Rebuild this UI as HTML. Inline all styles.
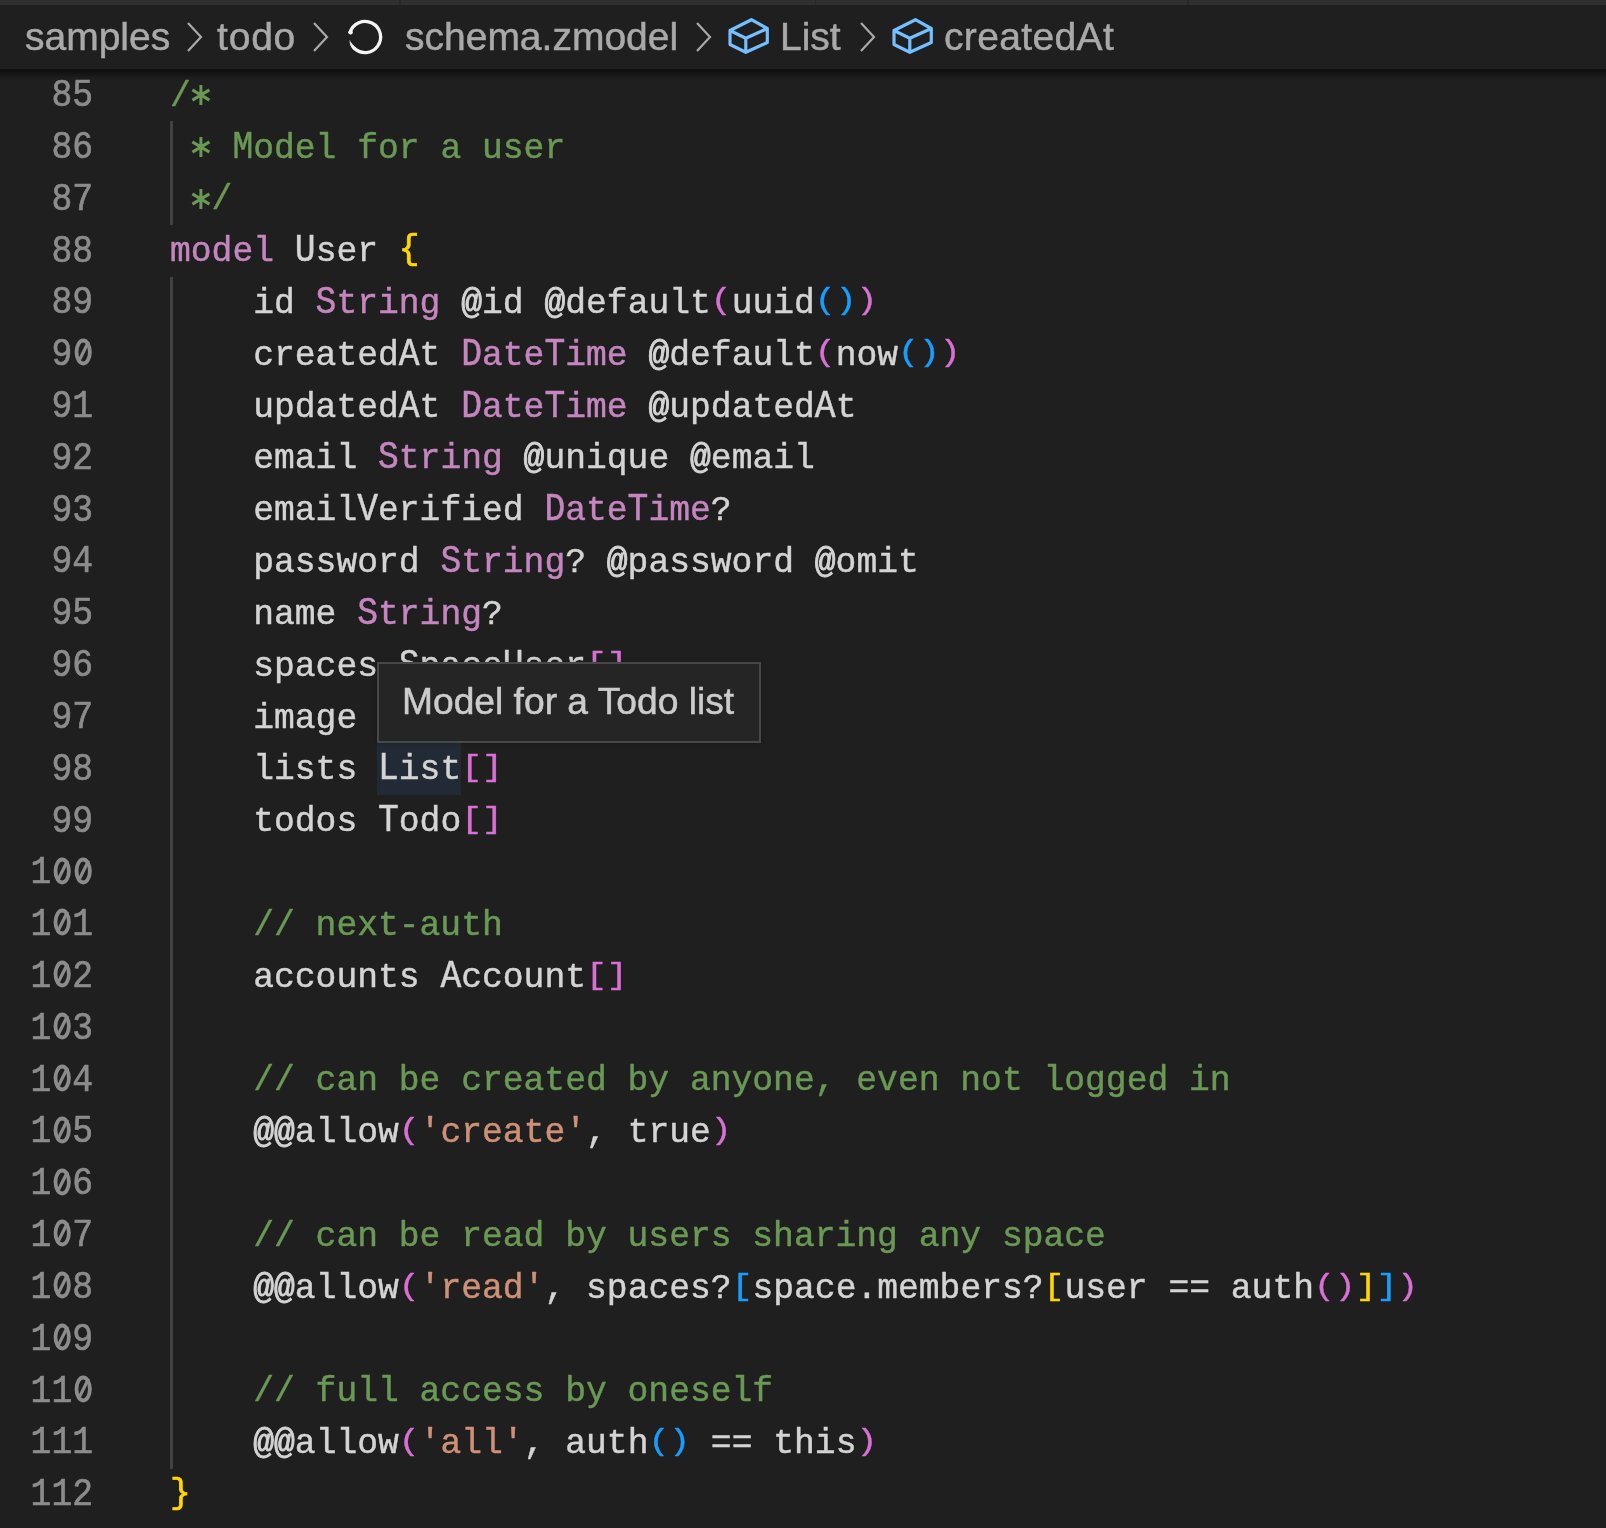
<!DOCTYPE html>
<html><head><meta charset="utf-8">
<style>
html,body{margin:0;padding:0}
body{width:1606px;height:1528px;background:#1f1f1f;position:relative;overflow:hidden}
.tabs{position:absolute;left:0;top:0;width:1606px;height:5px;background:#2f2f2f}
.tabs i{position:absolute;top:0;width:1.6px;height:5px;background:#262626}
.bc{position:absolute;left:0;top:5px;width:1606px;height:64px;background:#1f1f1f}
.shadow{position:absolute;left:0;top:69.3px;width:1606px;height:12px;background:linear-gradient(#111111 0px,#111111 3px,#171717 6px,#1c1c1c 8.5px,#1f1f1f 12px)}
.bt{position:absolute;top:0;height:64px;line-height:64px;font-family:"Liberation Sans",sans-serif;font-size:39px;color:#a9a9a9;white-space:pre;-webkit-text-stroke:0.5px currentColor;will-change:transform}
.ln{position:absolute;left:0;width:93px;text-align:right;height:52px;line-height:52px;font-family:"Liberation Mono",monospace;font-size:34.66px;color:#8c8c8c;white-space:pre;transform:scaleY(1.14);transform-origin:0 35.22px;margin-top:1.6px}
.cl{position:absolute;left:169.6px;height:52px;line-height:52px;font-family:"Liberation Mono",monospace;font-size:34.66px;color:#d4d4d4;white-space:pre;transform:scaleY(1.0);transform-origin:0 35.22px;margin-top:1.2px}
.g{color:#6a9955}.p{color:#c586c0}.o{color:#da70d6}.b{color:#179fff}.y{color:#ffd700}.s{color:#ce9178}
.hl{position:absolute;background:#212a35}
.astsvg{position:absolute}
.brc{display:inline-block;transform:translateY(-2.5px);-webkit-text-stroke:0.7px currentColor}
.at{-webkit-text-stroke:0.9px currentColor}
.cap{display:inline-block;transform:scaleY(1.13);transform-origin:50% 35.22px}
.br{display:inline-block;transform:scaleY(0.86);transform-origin:50% 10px;-webkit-text-stroke:0.5px currentColor}
.ast{display:inline-block;transform:translateY(11.6px) scale(1.7,1.4);-webkit-text-stroke:0.15px currentColor}
.cl,.ln{-webkit-text-stroke:0.45px currentColor;will-change:transform}
.ln{-webkit-text-stroke:0.6px currentColor}
.guide{position:absolute;left:170.3px;width:2.6px;background:#424242}
.tip{position:absolute;left:377px;top:662px;width:380px;height:77px;background:#252525;border:2px solid #484848;box-shadow:0 0 4px rgba(0,0,0,0.25)}
.tip span{position:absolute;left:22.5px;top:-1px;will-change:transform;-webkit-text-stroke:0.5px currentColor;line-height:77px;font-family:"Liberation Sans",sans-serif;font-size:37.2px;color:#cccccc;white-space:pre}
</style></head><body>
<div class="tabs"><i style="left:399.4px"></i><i style="left:814.5px"></i><i style="left:1187.3px"></i></div>
<div class="bc">
<span class="bt" style="left:25px">samples</span>
<svg style="position:absolute;left:185px;top:16px" width="20" height="32"><path d="M3 2 L16 16 L3 30" fill="none" stroke="#a9a9a9" stroke-width="2.2"/></svg>
<span class="bt" style="left:217px;letter-spacing:0.8px">todo</span>
<svg style="position:absolute;left:311px;top:16px" width="20" height="32"><path d="M3 2 L16 16 L3 30" fill="none" stroke="#a9a9a9" stroke-width="2.2"/></svg>
<svg style="position:absolute;left:340px;top:7px" width="50" height="50"><g fill="none" stroke="#f4f4f4" stroke-linecap="round"><path d="M10.08 20.44A15.6 15.6 0 1 1 13.97 36.03" stroke-width="3.3"/><path d="M13.97 36.03A15.6 15.6 0 0 1 12.54 34.39" stroke-width="3"/><path d="M12.54 34.39A15.6 15.6 0 0 1 11.36 32.56" stroke-width="2.4" stroke-opacity="0.9"/><path d="M11.36 32.56A15.6 15.6 0 0 1 10.44 30.59" stroke-width="1.8" stroke-opacity="0.75"/><path d="M10.44 30.59A15.6 15.6 0 0 1 9.80 28.51" stroke-width="1.1" stroke-opacity="0.5"/></g><circle cx="10.6" cy="20.3" r="2.2" fill="#f4f4f4"/></svg>
<span class="bt" style="left:405px">schema.zmodel</span>
<svg style="position:absolute;left:694px;top:16px" width="20" height="32"><path d="M3 2 L16 16 L3 30" fill="none" stroke="#a9a9a9" stroke-width="2.2"/></svg>
<svg style="position:absolute;left:720px;top:7px" width="60" height="50"><path d="M31.4 7.7 L47.3 16.5 L47.3 30.5 L25.8 40.3 L10 32.5 L10 18.5 Z M10 18.5 L25.8 26.3 L47.3 16.5 M25.8 26.3 L25.8 40.3" fill="none" stroke="#75beff" stroke-width="3.2" stroke-linejoin="round"/></svg>
<span class="bt" style="left:780px">List</span>
<svg style="position:absolute;left:858px;top:16px" width="20" height="32"><path d="M3 2 L16 16 L3 30" fill="none" stroke="#a9a9a9" stroke-width="2.2"/></svg>
<svg style="position:absolute;left:884px;top:7px" width="60" height="50"><path d="M31.4 7.7 L47.3 16.5 L47.3 30.5 L25.8 40.3 L10 32.5 L10 18.5 Z M10 18.5 L25.8 26.3 L47.3 16.5 M25.8 26.3 L25.8 40.3" fill="none" stroke="#75beff" stroke-width="3.2" stroke-linejoin="round"/></svg>
<span class="bt" style="left:944px;letter-spacing:0.35px">createdAt</span>
</div>
<div class="shadow"></div>
<div class="hl" style="left:377.2px;top:743.16px;width:83.6px;height:51.82px"></div>
<div class="guide" style="top:121.32px;height:103.64px"></div>
<div class="guide" style="top:276.78px;height:1191.86px"></div>
<svg class="astsvg" style="left:190.40px;top:84.10px" width="21" height="22"><path d="M10.9 1V21M2.4 5.9L19.4 16.1M2.4 16.1L19.4 5.9" stroke="#6a9955" stroke-width="3" fill="none"/></svg>
<div class="ln" style="top:69.50px">85</div><div class="cl" style="top:69.50px"><span class="g">/ </span></div>
<svg class="astsvg" style="left:190.40px;top:135.92px" width="21" height="22"><path d="M10.9 1V21M2.4 5.9L19.4 16.1M2.4 16.1L19.4 5.9" stroke="#6a9955" stroke-width="3" fill="none"/></svg>
<div class="ln" style="top:121.32px">86</div><div class="cl" style="top:121.32px"><span class="g">   <span class="cap">M</span>odel for a user</span></div>
<svg class="astsvg" style="left:190.40px;top:187.74px" width="21" height="22"><path d="M10.9 1V21M2.4 5.9L19.4 16.1M2.4 16.1L19.4 5.9" stroke="#6a9955" stroke-width="3" fill="none"/></svg>
<div class="ln" style="top:173.14px">87</div><div class="cl" style="top:173.14px"><span class="g">  /</span></div>
<div class="ln" style="top:224.96px">88</div><div class="cl" style="top:224.96px"><span class="p">model</span> <span class="cap">U</span>ser <span class="y"><span class="brc">{</span></span></div>
<div class="ln" style="top:276.78px">89</div><div class="cl" style="top:276.78px">    id <span class="p"><span class="cap">S</span>tring</span> <span class="at">@</span>id <span class="at">@</span>default<span class="o"><span class="br">(</span></span>uuid<span class="b"><span class="br">(</span><span class="br">)</span></span><span class="o"><span class="br">)</span></span></div>
<svg class="astsvg" style="left:72.20px;top:337.45px" width="21" height="30"><ellipse cx="11.20" cy="15" rx="6.7" ry="11.5" stroke="#8c8c8c" stroke-width="3.8" fill="none"/><path d="M6.40 25.1L16.50 4.8" stroke="#8c8c8c" stroke-width="3.2"/></svg>
<div class="ln" style="top:328.60px">9 </div><div class="cl" style="top:328.60px">    created<span class="cap">A</span>t <span class="p"><span class="cap">D</span>ate<span class="cap">T</span>ime</span> <span class="at">@</span>default<span class="o"><span class="br">(</span></span>now<span class="b"><span class="br">(</span><span class="br">)</span></span><span class="o"><span class="br">)</span></span></div>
<div class="ln" style="top:380.42px">91</div><div class="cl" style="top:380.42px">    updated<span class="cap">A</span>t <span class="p"><span class="cap">D</span>ate<span class="cap">T</span>ime</span> <span class="at">@</span>updated<span class="cap">A</span>t</div>
<div class="ln" style="top:432.24px">92</div><div class="cl" style="top:432.24px">    email <span class="p"><span class="cap">S</span>tring</span> <span class="at">@</span>unique <span class="at">@</span>email</div>
<div class="ln" style="top:484.06px">93</div><div class="cl" style="top:484.06px">    email<span class="cap">V</span>erified <span class="p"><span class="cap">D</span>ate<span class="cap">T</span>ime</span>?</div>
<div class="ln" style="top:535.88px">94</div><div class="cl" style="top:535.88px">    password <span class="p"><span class="cap">S</span>tring</span>? <span class="at">@</span>password <span class="at">@</span>omit</div>
<div class="ln" style="top:587.70px">95</div><div class="cl" style="top:587.70px">    name <span class="p"><span class="cap">S</span>tring</span>?</div>
<div class="ln" style="top:639.52px">96</div><div class="cl" style="top:639.52px">    spaces <span class="cap">S</span>pace<span class="cap">U</span>ser<span class="o"><span class="br">[</span><span class="br">]</span></span></div>
<div class="ln" style="top:691.34px">97</div><div class="cl" style="top:691.34px">    image <span class="p"><span class="cap">S</span>tring</span>?</div>
<div class="ln" style="top:743.16px">98</div><div class="cl" style="top:743.16px">    lists <span class="h"><span class="cap">L</span>ist</span><span class="o"><span class="br">[</span><span class="br">]</span></span></div>
<div class="ln" style="top:794.98px">99</div><div class="cl" style="top:794.98px">    todos <span class="cap">T</span>odo<span class="o"><span class="br">[</span><span class="br">]</span></span></div>
<svg class="astsvg" style="left:72.20px;top:855.65px" width="21" height="30"><ellipse cx="11.20" cy="15" rx="6.7" ry="11.5" stroke="#8c8c8c" stroke-width="3.8" fill="none"/><path d="M6.40 25.1L16.50 4.8" stroke="#8c8c8c" stroke-width="3.2"/></svg>
<svg class="astsvg" style="left:51.40px;top:855.65px" width="21" height="30"><ellipse cx="11.20" cy="15" rx="6.7" ry="11.5" stroke="#8c8c8c" stroke-width="3.8" fill="none"/><path d="M6.40 25.1L16.50 4.8" stroke="#8c8c8c" stroke-width="3.2"/></svg>
<div class="ln" style="top:846.80px">1  </div><div class="cl" style="top:846.80px"></div>
<svg class="astsvg" style="left:51.40px;top:907.47px" width="21" height="30"><ellipse cx="11.20" cy="15" rx="6.7" ry="11.5" stroke="#8c8c8c" stroke-width="3.8" fill="none"/><path d="M6.40 25.1L16.50 4.8" stroke="#8c8c8c" stroke-width="3.2"/></svg>
<div class="ln" style="top:898.62px">1 1</div><div class="cl" style="top:898.62px"><span class="g">    // next-auth</span></div>
<svg class="astsvg" style="left:51.40px;top:959.29px" width="21" height="30"><ellipse cx="11.20" cy="15" rx="6.7" ry="11.5" stroke="#8c8c8c" stroke-width="3.8" fill="none"/><path d="M6.40 25.1L16.50 4.8" stroke="#8c8c8c" stroke-width="3.2"/></svg>
<div class="ln" style="top:950.44px">1 2</div><div class="cl" style="top:950.44px">    accounts <span class="cap">A</span>ccount<span class="o"><span class="br">[</span><span class="br">]</span></span></div>
<svg class="astsvg" style="left:51.40px;top:1011.11px" width="21" height="30"><ellipse cx="11.20" cy="15" rx="6.7" ry="11.5" stroke="#8c8c8c" stroke-width="3.8" fill="none"/><path d="M6.40 25.1L16.50 4.8" stroke="#8c8c8c" stroke-width="3.2"/></svg>
<div class="ln" style="top:1002.26px">1 3</div><div class="cl" style="top:1002.26px"></div>
<svg class="astsvg" style="left:51.40px;top:1062.93px" width="21" height="30"><ellipse cx="11.20" cy="15" rx="6.7" ry="11.5" stroke="#8c8c8c" stroke-width="3.8" fill="none"/><path d="M6.40 25.1L16.50 4.8" stroke="#8c8c8c" stroke-width="3.2"/></svg>
<div class="ln" style="top:1054.08px">1 4</div><div class="cl" style="top:1054.08px"><span class="g">    // can be created by anyone, even not logged in</span></div>
<svg class="astsvg" style="left:51.40px;top:1114.75px" width="21" height="30"><ellipse cx="11.20" cy="15" rx="6.7" ry="11.5" stroke="#8c8c8c" stroke-width="3.8" fill="none"/><path d="M6.40 25.1L16.50 4.8" stroke="#8c8c8c" stroke-width="3.2"/></svg>
<div class="ln" style="top:1105.90px">1 5</div><div class="cl" style="top:1105.90px">    <span class="at">@</span><span class="at">@</span>allow<span class="o"><span class="br">(</span></span><span class="s">&#x27;create&#x27;</span>, true<span class="o"><span class="br">)</span></span></div>
<svg class="astsvg" style="left:51.40px;top:1166.57px" width="21" height="30"><ellipse cx="11.20" cy="15" rx="6.7" ry="11.5" stroke="#8c8c8c" stroke-width="3.8" fill="none"/><path d="M6.40 25.1L16.50 4.8" stroke="#8c8c8c" stroke-width="3.2"/></svg>
<div class="ln" style="top:1157.72px">1 6</div><div class="cl" style="top:1157.72px"></div>
<svg class="astsvg" style="left:51.40px;top:1218.39px" width="21" height="30"><ellipse cx="11.20" cy="15" rx="6.7" ry="11.5" stroke="#8c8c8c" stroke-width="3.8" fill="none"/><path d="M6.40 25.1L16.50 4.8" stroke="#8c8c8c" stroke-width="3.2"/></svg>
<div class="ln" style="top:1209.54px">1 7</div><div class="cl" style="top:1209.54px"><span class="g">    // can be read by users sharing any space</span></div>
<svg class="astsvg" style="left:51.40px;top:1270.21px" width="21" height="30"><ellipse cx="11.20" cy="15" rx="6.7" ry="11.5" stroke="#8c8c8c" stroke-width="3.8" fill="none"/><path d="M6.40 25.1L16.50 4.8" stroke="#8c8c8c" stroke-width="3.2"/></svg>
<div class="ln" style="top:1261.36px">1 8</div><div class="cl" style="top:1261.36px">    <span class="at">@</span><span class="at">@</span>allow<span class="o"><span class="br">(</span></span><span class="s">&#x27;read&#x27;</span>, spaces?<span class="b"><span class="br">[</span></span>space.members?<span class="y"><span class="br">[</span></span>user == auth<span class="o"><span class="br">(</span><span class="br">)</span></span><span class="y"><span class="br">]</span></span><span class="b"><span class="br">]</span></span><span class="o"><span class="br">)</span></span></div>
<svg class="astsvg" style="left:51.40px;top:1322.03px" width="21" height="30"><ellipse cx="11.20" cy="15" rx="6.7" ry="11.5" stroke="#8c8c8c" stroke-width="3.8" fill="none"/><path d="M6.40 25.1L16.50 4.8" stroke="#8c8c8c" stroke-width="3.2"/></svg>
<div class="ln" style="top:1313.18px">1 9</div><div class="cl" style="top:1313.18px"></div>
<svg class="astsvg" style="left:72.20px;top:1373.85px" width="21" height="30"><ellipse cx="11.20" cy="15" rx="6.7" ry="11.5" stroke="#8c8c8c" stroke-width="3.8" fill="none"/><path d="M6.40 25.1L16.50 4.8" stroke="#8c8c8c" stroke-width="3.2"/></svg>
<div class="ln" style="top:1365.00px">11 </div><div class="cl" style="top:1365.00px"><span class="g">    // full access by oneself</span></div>
<div class="ln" style="top:1416.82px">111</div><div class="cl" style="top:1416.82px">    <span class="at">@</span><span class="at">@</span>allow<span class="o"><span class="br">(</span></span><span class="s">&#x27;all&#x27;</span>, auth<span class="b"><span class="br">(</span><span class="br">)</span></span> == this<span class="o"><span class="br">)</span></span></div>
<div class="ln" style="top:1468.64px">112</div><div class="cl" style="top:1468.64px"><span class="y"><span class="brc">}</span></span></div>
<div class="tip"><span>Model for a Todo list</span></div>
</body></html>
